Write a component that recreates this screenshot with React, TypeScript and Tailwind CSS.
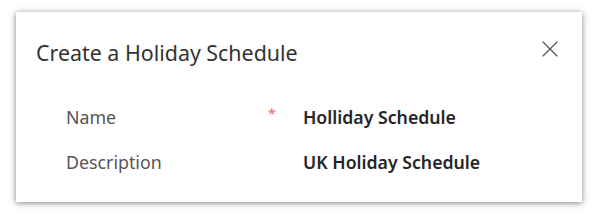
import { X } from 'lucide-react';

const font = { fontFamily: '"Noto Sans", "Open Sans", sans-serif' };

function Row({ label, value, required }: { label: string; value: string; required?: boolean }) {
  return (
    <div className="flex h-[45px] items-center">
      <div className="w-[202px] text-[17.8px] text-[#555]">{label}</div>
      <div className="-mt-2 w-[35px] text-[14px] text-[#e86c6c]">{required ? '*' : ''}</div>
      <div className="text-[17.7px] font-semibold text-[#262626]">{value}</div>
    </div>
  );
}

export default function App() {
  return (
    <div className="h-[214px] w-[600px] bg-white pl-4 pt-3" style={font}>
      <div className="flex h-[190px] w-[566px] flex-col bg-white shadow-[0_1px_6px_rgba(0,0,0,0.5)]">
        <div className="flex items-center justify-between pl-5 pr-[18px] pt-[25px]">
          <h1 className="text-[21.4px] text-[#333]">Create a Holiday Schedule</h1>
          <X className="-mt-2 h-[28px] w-[28px] text-[#555]" strokeWidth={1} />
        </div>
        <div className="pl-[50px] pt-[26px]">
          <Row label="Name" value="Holliday Schedule" required />
          <Row label="Description" value="UK Holiday Schedule" />
        </div>
      </div>
    </div>
  );
}
